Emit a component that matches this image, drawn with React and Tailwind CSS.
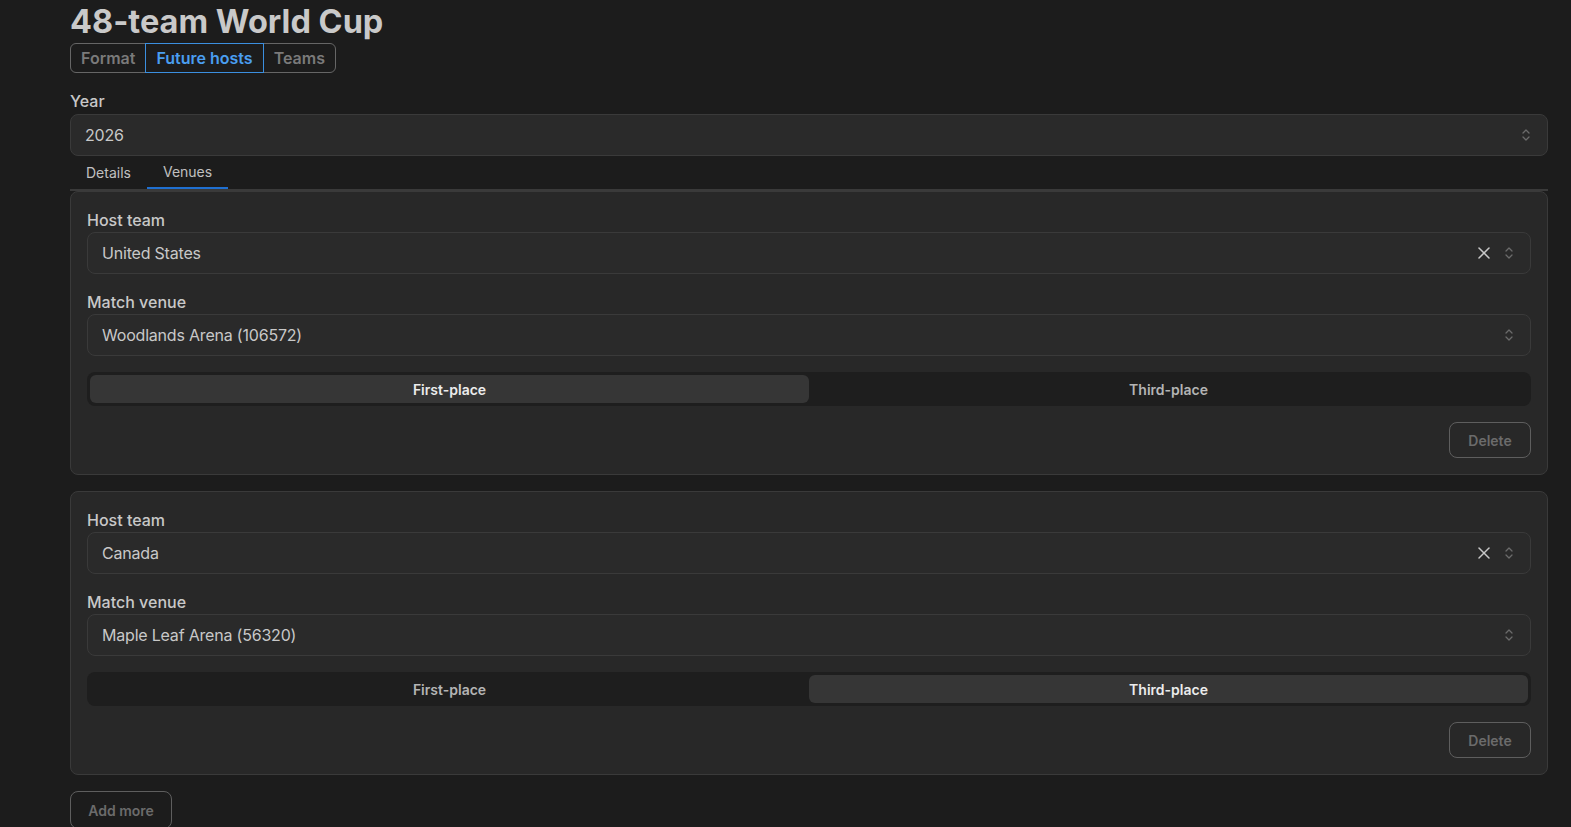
import React, { useState } from 'react';

const Chevrons = () => (
  <svg width="10" height="14" viewBox="0 0 10 14" fill="none" stroke="#6b6b6b" strokeWidth="1.3" strokeLinecap="round" strokeLinejoin="round">
    <path d="M2 5 L5 2 L8 5" />
    <path d="M2 9 L5 12 L8 9" />
  </svg>
);

const Clear = () => (
  <svg width="14" height="14" viewBox="0 0 14 14" fill="none" stroke="#c8c8c8" strokeWidth="1.5" strokeLinecap="round">
    <path d="M2 2 L12 12" />
    <path d="M12 2 L2 12" />
  </svg>
);

const Field = ({ label, value, clearable }) => (
  <div className="flex flex-col">
    <label className="text-[16px] leading-6 font-medium text-[#c8c8c8]">{label}</label>
    <div className="h-[42px] flex items-center justify-between bg-[#2a2a2a] border border-[#3a3a3a] rounded-lg pl-[14px] pr-[16px]">
      <span className="text-[16px] tracking-[-0.2px] text-[#c8c8c8]">{value}</span>
      <div className="flex items-center gap-[13px]">
        {clearable && <Clear />}
        <Chevrons />
      </div>
    </div>
  </div>
);

const Placement = ({ value }) => (
  <div className="grid grid-cols-2 h-[34px] bg-[#1e1e1e] rounded-lg p-[3px]">
    {['First-place', 'Third-place'].map(opt => (
      <div
        key={opt}
        className={
          opt === value
            ? 'flex items-center justify-center rounded-md bg-[#363636] text-[14px] font-semibold text-[#ececec]'
            : 'flex items-center justify-center text-[14px] font-semibold text-[#b4b4b4]'
        }
      >
        {opt}
      </div>
    ))}
  </div>
);

const HostCard = ({ team, venue, place }) => (
  <div className="bg-[#282828] border border-[#3a3a3a] rounded-lg p-4 flex flex-col gap-4">
    <Field label="Host team" value={team} clearable />
    <Field label="Match venue" value={venue} />
    <Placement value={place} />
    <div className="flex justify-end">
      <button className="h-[36px] w-[82px] border border-[#5e5e5e] rounded-lg text-[14px] font-semibold text-[#6b6b6b]">
        Delete
      </button>
    </div>
  </div>
);

export default function App() {
  const [tab] = useState('Future hosts');
  const hosts = [
    { team: 'United States', venue: 'Woodlands Arena (106572)', place: 'First-place' },
    { team: 'Canada', venue: 'Maple Leaf Arena (56320)', place: 'Third-place' },
  ];

  return (
    <div className="min-h-screen bg-[#1c1c1c] pl-[70px] pr-[23px] pb-10" style={{ fontFamily: 'Inter, "Noto Sans", sans-serif' }}>
      <h1 className="text-[32.5px] leading-[43px] font-bold text-[#c9c9c9]">48-team World Cup</h1>
      <div className="flex">
        {['Format', 'Future hosts', 'Teams'].map((t, i) => (
          <button
            key={t}
            className={
              (t === tab
                ? 'border-[#3b8fe0] text-[#4a9ef0] z-10 '
                : 'border-[#666666] text-[#7a7a7a] ') +
              (i === 0 ? 'rounded-l-md ' : '-ml-px ') +
              (i === 2 ? 'rounded-r-md ' : '') +
              'h-[30px] px-[10px] border text-[16px] font-semibold'
            }
          >
            {t}
          </button>
        ))}
      </div>

      <div className="mt-4 text-[16px] leading-6 font-medium text-[#c8c8c8]">Year</div>
      <div className="mt-px h-[42px] flex items-center justify-between bg-[#2a2a2a] border border-[#3a3a3a] rounded-lg pl-[14px] pr-[16px]">
        <span className="text-[16px] tracking-[-0.2px] text-[#c8c8c8]">2026</span>
        <Chevrons />
      </div>

      <div className="flex border-b-2 border-[#3a3a3a]">
        <div className="h-[33px] px-4 flex items-center text-[14px] text-[#c0c0c0]">Details</div>
        <div className="h-[33px] px-4 flex items-center text-[14px] text-[#c0c0c0] border-b-2 border-[#1f6fd0] -mb-[2px]">Venues</div>
      </div>

      <div className="flex flex-col gap-4">
        {hosts.map(h => (
          <HostCard key={h.team} {...h} />
        ))}
      </div>

      <button className="mt-4 h-[38px] w-[102px] border border-[#5e5e5e] rounded-lg text-[14px] font-semibold text-[#6b6b6b]">
        Add more
      </button>
    </div>
  );
}
